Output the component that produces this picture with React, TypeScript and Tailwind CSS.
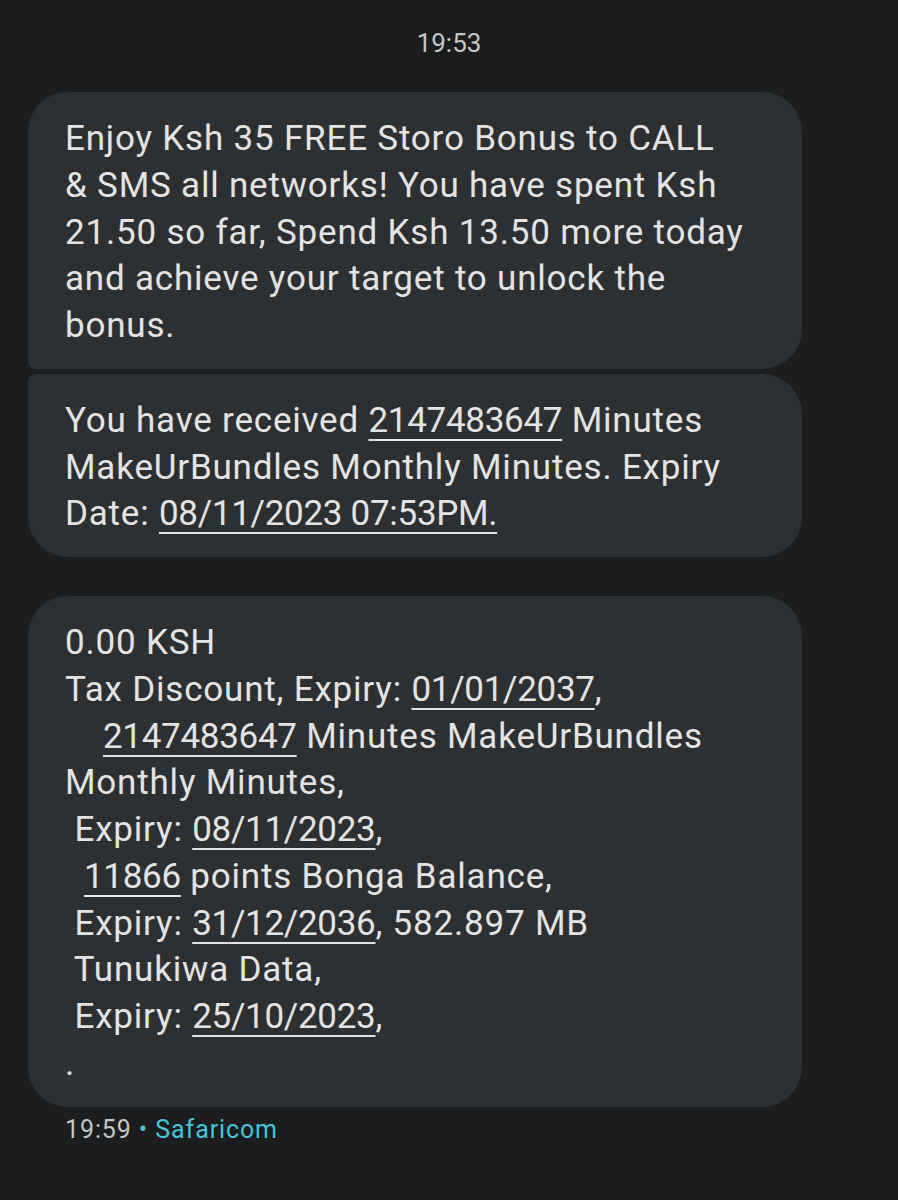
import React from "react";

const U = ({ children }: { children: React.ReactNode }) => (
  <span className="underline decoration-[2px] underline-offset-[7px] tracking-[-0.3px]">{children}</span>
);

const Line = ({ children }: { children: React.ReactNode }) => (
  <div className="whitespace-pre">{children}</div>
);

export default function App() {
  return (
    <div
      className="w-[898px] min-h-[1200px] bg-[#1b1d1f] text-[#e3e3e3]"
      style={{ fontFamily: "Roboto, 'Noto Sans', sans-serif" }}
    >
      <div className="pt-[30px] text-center text-[26px] leading-[26px] text-[#c4c7c5]">19:53</div>

      <div className="mt-[36px] flex flex-col pl-[28px] tracking-[0.8px]">
        <div className="w-[774px] rounded-tl-[40px] rounded-tr-[40px] rounded-br-[40px] rounded-bl-[8px] bg-[#2d3032] pl-[37px] pt-[24px] pb-[19px] text-[35px] leading-[46.75px]">
          <Line>Enjoy Ksh 35 FREE Storo Bonus to CALL</Line>
          <Line>& SMS all networks! You have spent Ksh</Line>
          <Line>21.50 so far, Spend Ksh 13.50 more today</Line>
          <Line>and achieve your target to unlock the</Line>
          <Line>bonus.</Line>
        </div>

        <div className="mt-[5px] w-[774px] rounded-tl-[8px] rounded-tr-[40px] rounded-br-[40px] rounded-bl-[40px] bg-[#2d3032] pl-[37px] pt-[24px] pb-[19px] text-[35px] leading-[46.75px]">
          <Line>
            You have received <U>2147483647</U> Minutes
          </Line>
          <Line>MakeUrBundles Monthly Minutes. Expiry</Line>
          <Line>
            Date: <U>08/11/2023 07:53PM.</U>
          </Line>
        </div>

        <div className="mt-[39px] w-[774px] rounded-[40px] bg-[#2d3032] pl-[37px] pt-[24px] pb-[19px] text-[35px] leading-[46.75px]">
          <Line>0.00 KSH</Line>
          <Line>
            Tax Discount, Expiry: <U>01/01/2037</U>,
          </Line>
          <Line>
            {"    "}
            <U>2147483647</U> Minutes MakeUrBundles
          </Line>
          <Line>Monthly Minutes,</Line>
          <Line>
            {" "}Expiry: <U>08/11/2023</U>,
          </Line>
          <Line>
            {"  "}
            <U>11866</U> points Bonga Balance,
          </Line>
          <Line>
            {" "}Expiry: <U>31/12/2036</U>, 582.897 MB
          </Line>
          <Line>{" "}Tunukiwa Data,</Line>
          <Line>
            {" "}Expiry: <U>25/10/2023</U>,
          </Line>
          <Line>.</Line>
        </div>

        <div className="mt-[10px] pl-[37px] text-[25px] leading-[25px] tracking-[0.9px]">
          <span className="text-[#c4c7c5]">19:59 </span>
          <span className="text-[#45c6d9]">• Safaricom</span>
        </div>
      </div>
    </div>
  );
}
